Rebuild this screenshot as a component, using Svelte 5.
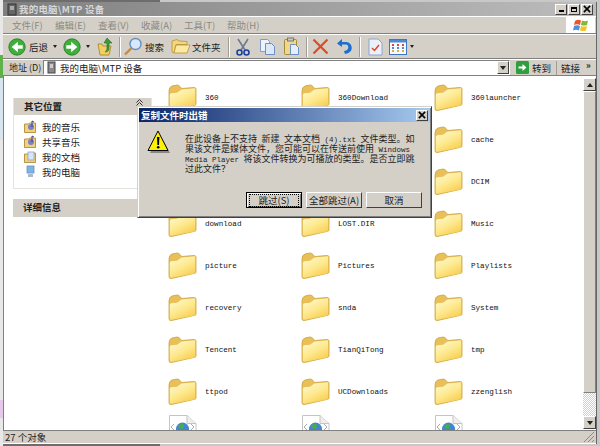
<script>
  const menus = ['文件(F)', '编辑(E)', '查看(V)', '收藏(A)', '工具(T)', '帮助(H)'];
  const places = [
    { label: '我的音乐', kind: 'music' },
    { label: '共享音乐', kind: 'music' },
    { label: '我的文档', kind: 'docs' },
    { label: '我的电脑', kind: 'pc' }
  ];
  const folders = [
    '360', '360Download', '360launcher',
    '', '', 'cache',
    '', '', 'DCIM',
    'download', 'LOST.DIR', 'Music',
    'picture', 'Pictures', 'Playlists',
    'recovery', 'snda', 'System',
    'Tencent', 'TianQiTong', 'tmp',
    'ttpod', 'UCDownloads', 'zzenglish'
  ];
</script>

<div class="screen">
  <div class="window">
    <div class="titlebar">
      <svg class="device" width="12" height="13" viewBox="0 0 12 13"><rect x="2" y="1" width="8" height="11" fill="#666" stroke="#333"/><rect x="4" y="3" width="4" height="4" fill="#aaa"/></svg>
      <span class="title">我的电脑\MTP 设备</span>
      <div class="caption">
        <button class="cap"><i class="min"></i></button>
        <button class="cap"><i class="max"></i></button>
        <button class="cap">
          <svg width="8" height="8" viewBox="0 0 9 9"><path d="M1 1l7 7M8 1L1 8" stroke="#000" stroke-width="1.800"/></svg>
        </button>
      </div>
    </div>

    <div class="menubar">
      <div class="menus">
        {#each menus as m}<span>{m}</span>{/each}
      </div>
      <div class="flag">
        <svg width="16" height="15" viewBox="0 0 16 15">
          <path d="M2 3q3-2 6-.5L7 7Q4 5.500 1 7z" fill="#e8552a"/>
          <path d="M9 2.500q3 1.500 6 0L14 7q-3 1-6 0z" fill="#7fb83a"/>
          <path d="M1 8q3-1.500 6 0l-1 4.500q-3-1.500-6 0z" fill="#4c8fe0"/>
          <path d="M8 8q3 1 6 0l-1 4.500q-3 1-6 0z" fill="#f4c32c"/>
        </svg>
      </div>
    </div>

    <div class="toolbar">
      <svg class="nav back" width="18" height="18" viewBox="0 0 22 22"><circle cx="11" cy="11" r="10" fill="#3fae3a" stroke="#1d7a22"/><path d="M18 9h-6V4.500L4.500 11l7.500 6.500V13h6z" fill="#fff"/></svg>
      <span class="tool-label">后退</span>
      <i class="caret first"></i>
      <svg class="nav" width="18" height="18" viewBox="0 0 22 22"><circle cx="11" cy="11" r="10" fill="#3fae3a" stroke="#1d7a22"/><path d="M4 9h6V4.500l7.500 6.500-7.500 6.500V13H4z" fill="#fff"/></svg>
      <i class="caret second"></i>
      <svg class="up" width="18" height="20" viewBox="0 0 18 20">
        <path d="M1 7h4l1 2h8l-2 9H3z" fill="#f2cf63" stroke="#a58122" stroke-width=".8"/>
        <path d="M10 1l5 5h-3v6c0 2-2 3-4 3 1-1 2-2 2-4V6H7z" fill="#3c9c3a" stroke="#25702a" stroke-width=".6"/>
      </svg>
      <i class="sep"></i>
      <svg class="search" width="20" height="20" viewBox="0 0 20 20">
        <circle cx="12.500" cy="7" r="5.500" fill="#d6e8fb" stroke="#6b8fbc" stroke-width="1.400"/>
        <path d="M8.500 11L2 17.500" stroke="#c98a3a" stroke-width="2.400"/>
      </svg>
      <span class="tool-label">搜索</span>
      <svg class="folders" width="20" height="18" viewBox="0 0 20 18">
        <path d="M1 3l5-1.500L8 3l8 .5v3H5L3 15 1 14z" fill="#f3d77a" stroke="#b99236" stroke-width=".8"/>
        <path d="M5 7h14l-3 8H3z" fill="#fbe9a4" stroke="#b99236" stroke-width=".8"/>
      </svg>
      <span class="tool-label folders-label">文件夹</span>
      <i class="sep"></i>
      <svg class="cut" width="14" height="18" viewBox="0 0 14 18">
        <path d="M2 1l7 11M12 1L5 12" stroke="#6a7a94" stroke-width="1.600"/>
        <circle cx="3.500" cy="14.500" r="2.500" fill="none" stroke="#1b3f9c" stroke-width="1.600"/>
        <circle cx="10.500" cy="14.500" r="2.500" fill="none" stroke="#1b3f9c" stroke-width="1.600"/>
      </svg>
      <svg class="copy" width="17" height="18" viewBox="0 0 17 18">
        <path d="M1.500 1.500h7l2 2v10h-9z" fill="#eef3fb" stroke="#7f9cc9"/>
        <path d="M6.500 5.500h6l3 3v8h-9z" fill="#dce8f8" stroke="#6d8fc6"/>
      </svg>
      <svg class="paste" width="17" height="19" viewBox="0 0 17 19">
        <rect x="1.500" y="2.500" width="12" height="15" rx="1" fill="#f0d88a" stroke="#a58a3a"/>
        <rect x="4.500" y="1" width="6" height="3" fill="#c9c9c0" stroke="#777"/>
        <path d="M7.500 7.500h5l3 3v7h-8z" fill="#e6eefa" stroke="#6d8fc6"/>
      </svg>
      <i class="sep"></i>
      <svg class="del" width="17" height="17" viewBox="0 0 17 17"><path d="M1.500 1.500l14 14M15.500 1.500l-14 14" stroke="#df4a22" stroke-width="2.200"/></svg>
      <svg class="undo" width="17" height="17" viewBox="0 0 17 17">
        <path d="M6 1L1 5.500 6 9V6.500h4c3 0 3 5 0 6l-2 .5 1 3c6-1 8-5 6-9-1-2-3-3-5-3H6z" fill="#1c6fd0"/>
      </svg>
      <i class="sep"></i>
      <svg class="props" width="15" height="18" viewBox="0 0 15 18">
        <path d="M1 1h9l4 4v12H1z" fill="#eaf1fb" stroke="#8aa6d2"/>
        <path d="M4 10l2.500 2.500L11 7" fill="none" stroke="#e0452a" stroke-width="1.500"/>
      </svg>
      <svg class="views" width="18" height="16" viewBox="0 0 18 16">
        <rect x=".5" y=".5" width="17" height="15" fill="#f7f9fd" stroke="#3f76c4"/>
        <rect x="1" y="1" width="16" height="2.500" fill="#4d8ad8"/>
        <path d="M3 5h2v2H3zM8 5h2v2H8zM13 5h2v2h-2z" fill="#d64a3a"/>
        <path d="M3 8h2v2H3zM8 8h2v2H8zM13 8h2v2h-2z" fill="#4d8ad8"/>
        <path d="M3 11h2v2H3zM8 11h2v2H8zM13 11h2v2h-2z" fill="#e0b030"/>
      </svg>
      <i class="caret last"></i>
    </div>

    <div class="addressbar">
      <span class="addr-label">地址 (D)</span>
      <div class="addr-field">
        <svg width="12" height="13" viewBox="0 0 12 13"><rect x="2" y="1" width="7" height="11" fill="#8a8a8a" stroke="#444"/><rect x="4" y="3" width="3" height="4" fill="#ccc"/></svg>
        <span class="addr-text">我的电脑\MTP 设备</span>
        <button class="combo"><i class="caret dark"></i></button>
      </div>
      <div class="goto">
        <svg width="13" height="13" viewBox="0 0 13 13"><rect width="13" height="13" rx="1.500" fill="#2f9e3c"/><path d="M2.500 5.500h4V3l4 3.500-4 3.500V7.500h-4z" fill="#fff"/></svg>
        <span>转到</span>
      </div>
      <div class="links"><span>链接</span><b>»</b></div>
    </div>

    <div class="content">
      <div class="sidebar">
        <div class="panel">
          <div class="panel-head">
            其它位置
            <svg class="chev" width="7" height="7" viewBox="0 0 7 7"><path d="M.5 3.500l3-3 3 3M.5 6.500l3-3 3 3" fill="none" stroke="#333"/></svg>
          </div>
          <ul class="panel-body">
            {#each places as p}
              <li>
                <svg width="13" height="13" viewBox="0 0 13 13">
                  {#if p.kind === 'pc'}
                    <rect x="3" y="1" width="7" height="7" fill="#7db4ea" stroke="#6f8fb5" stroke-width=".8"/>
                    <rect x="4" y="9" width="5" height="3" fill="#a9b9cc"/>
                  {:else}
                    <path d="M.500 4h4l1-1h6v9.500h-11z" fill="#f1d27a" stroke="#a8802a" stroke-width=".8"/>
                    {#if p.kind === 'music'}
                      <circle cx="7" cy="7" r="3" fill="#7a7fc9"/>
                      <path d="M8 7V1l2 1" stroke="#3c4390" fill="none"/>
                    {:else}
                      <rect x="4" y="2" width="6" height="8" fill="#d6e6f8" stroke="#7f9cc9" stroke-width=".7"/>
                    {/if}
                  {/if}
                </svg>
                {p.label}
              </li>
            {/each}
          </ul>
        </div>
        <div class="panel-head details">详细信息</div>
      </div>

      <div class="files">
        <div class="grid">
          {#each folders as name}
            <div class="item">
              <svg width="29" height="28" viewBox="0 0 29 28">
                <defs>
                  <linearGradient id="fold" x1="0" y1="0" x2=".6" y2="1">
                    <stop offset="0" stop-color="#fffcd8"/>
                    <stop offset=".6" stop-color="#fde88c"/>
                    <stop offset="1" stop-color="#f9cf55"/>
                  </linearGradient>
                </defs>
                <path d="M1 8q0-4 3-5l5-1q2 0 3.500 2l1 1.500L26 4.500q2 0 2 1.500v15q0 1-1 1.200L3.500 27.500q-2.500.5-2.500-2z" fill="#e9bf58" stroke="#c9a33e" stroke-width=".8"/>
                <path d="M1.800 12q0-1.500 1.500-1.700l5.700-.6 4.500-3.200 13.700-1.300v16.400q0 .8-.8 1L3.500 26.800q-1.700.3-1.700-1.300z" fill="url(#fold)"/>
              </svg>
              <span>{name}</span>
            </div>
          {/each}
          {#each [0, 1, 2] as i (i)}
            <div class="item page">
              <svg width="29" height="28" viewBox="0 0 29 28">
                <path d="M1.500 .500H19l9 8v19H1.500z" fill="#fff" stroke="#c4c4c4"/>
                <path d="M19 .500v8h9" fill="#eee" stroke="#c4c4c4"/>
                <path d="M6 9l-3 3 3 3M23 9l3 3-3 3" fill="none" stroke="#aaa"/>
                <circle cx="14.500" cy="14" r="6.500" fill="#3f86d6"/>
                <path d="M10.500 10q4-2 6 0l-2 4-4-1z" fill="#4cab46"/>
              </svg>
            </div>
          {/each}
        </div>
        <div class="scrollbar">
          <button class="arrow"><i class="caret up-caret"></i></button>
          <div class="thumb"></div>
          <div class="track"></div>
          <button class="arrow"><i class="caret dark"></i></button>
        </div>
      </div>
    </div>

    <div class="statusbar">
      <span>27 个对象</span>
      <svg width="12" height="12" viewBox="0 0 12 12"><path d="M11 1L1 11M11 5l-6 6M11 9l-2 2" stroke="#8d8a82"/></svg>
    </div>
  </div>

  <div class="dialog">
    <div class="dlg-title">
      <span>复制文件时出错</span>
      <button class="cap">
        <svg width="8" height="8" viewBox="0 0 9 9"><path d="M1 1l7 7M8 1L1 8" stroke="#000" stroke-width="1.800"/></svg>
      </button>
    </div>
    <div class="dlg-body">
      <svg class="warn" width="24" height="24" viewBox="0 0 24 24">
        <path d="M3 23h20L13 5z" fill="#8a8780"/>
        <path d="M11 1L1 20.500h20z" fill="#fff200" stroke="#000" stroke-width="1"/>
        <path d="M10 7h2.400l-.4 8h-1.600z" fill="#000"/>
        <circle cx="11.200" cy="17.300" r="1.300" fill="#000"/>
      </svg>
      <p>
        <span class="line">在此设备上不支持<i>&#160;</i>新建<i>&#160;</i>文本文档<i>&#160;(4).txt&#160;</i>文件类型。如</span>
        <span class="line">果该文件是媒体文件，您可能可以在传送前使用<i>&#160;Windows</i></span>
        <span class="line"><i>Media Player&#160;</i>将该文件转换为可播放的类型。是否立即跳</span>
        <span class="line">过此文件？</span>
      </p>
    </div>
    <div class="dlg-buttons">
      <button class="btn default"><span>跳过(S)</span></button>
      <button class="btn">全部跳过(A)</button>
      <button class="btn">取消</button>
    </div>
  </div>
</div>

<style>
  :global(body) {
    margin: 0;
    background: #d4d0c8;
  }

  .screen {
    position: relative;
    width: 600px;
    height: 446px;
    overflow: hidden;
    background:
      linear-gradient(180deg, #e8e8e8 0 55px, #5fb24a 55px 78px, #d8e4ee 78px 140px, #e8e8e8 140px 400px, #e6c8e8 400px 418px, #e8e8e8 418px) 0 0 / 3px 100% no-repeat,
      linear-gradient(90deg, #6d6d6d 0 160px, #c8c8c8 160px);
    font-family: "Noto Sans CJK SC", "Liberation Sans", sans-serif;
    font-size: 9px;
    color: #222;
  }

  .window {
    position: absolute;
    left: 3px;
    top: 2px;
    width: 594px;
    height: 442px;
    display: flex;
    flex-direction: column;
    background: #d4d0c8;
    border-right: 1px solid #666;
    box-sizing: border-box;
  }

  .titlebar {
    height: 14px;
    display: flex;
    align-items: center;
    gap: 1px;
    padding: 0 2px;
    background: linear-gradient(90deg, #7f7f7f, #bdbdbd);
    color: #d8d8d8;
    flex: none;
  }

  .device { margin-left: 1px; }

  .title { font-size: 9.500px; font-weight: 700; letter-spacing: .2px; }

  .caption {
    margin-left: auto;
    display: flex;
    gap: 1px;
    margin-right: 1px;
  }

  button { padding: 0; font: inherit; color: inherit; }

  .cap {
    width: 12px;
    height: 11px;
    display: flex;
    align-items: center;
    justify-content: center;
    background: #d4d0c8;
    border: 1px solid;
    border-color: #fff #404040 #404040 #fff;
    box-sizing: border-box;
  }

  .min { width: 5px; height: 2px; background: #000; margin-top: 4px; }
  .max { width: 6px; height: 5px; border: 1px solid #000; border-top-width: 2px; box-sizing: border-box; }

  .menubar {
    height: 18px;
    box-sizing: border-box;
    display: flex;
    border-top: 1px solid #fff;
    border-bottom: 1px solid #808080;
    flex: none;
  }

  .menus {
    flex: 1;
    display: flex;
    padding-left: 9px;
    align-items: center;
    color: #8a8a84;
    font-size: 9.500px;
  }

  .menus span { width: 43px; flex: none; }

  .flag {
    width: 29px;
    margin-right: 1px;
    background: #fff;
    display: flex;
    align-items: center;
    justify-content: center;
  }

  .toolbar {
    height: 25px;
    box-sizing: border-box;
    display: flex;
    align-items: center;
    padding-left: 5px;
    border-top: 1px solid #fff;
    border-bottom: 1px solid #808080;
    flex: none;
  }

  .tool-label { font-size: 9.500px; flex: none; }
  .folders-label { margin-right: 3px; }

  .nav { flex: none; }
  .back { margin-right: 3px; }

  .caret {
    width: 0;
    height: 0;
    border: 2.500px solid transparent;
    border-top: 3px solid #222;
    border-bottom: 0;
    flex: none;
  }

  .caret.first { margin: 0 6px 0 5px; }
  .caret.second { margin: 0 7px 0 5px; }
  .caret.last { margin-left: 3px; }
  .caret.dark,
  .up-caret { border-left-width: 3.500px; border-right-width: 3.500px; border-top-width: 4px; }
  .up-caret { transform: rotate(180deg); }

  .sep {
    width: 1px;
    height: 20px;
    background: #a09d95;
    box-shadow: 1px 0 #fff;
    margin: 0 4px;
    flex: none;
  }

  .toolbar svg { flex: none; }
  .search { margin: 0 2px 0 -1px; }
  .folders { margin: 0 1px 0 7px; }
  .cut { margin-left: 3.500px; }
  .copy { margin-left: 9px; }
  .paste { margin: 0 2px 0 7px; }
  .del { margin-left: 1px; }
  .undo { margin: 0 2px 0 7px; }
  .props { margin-left: 4px; }
  .views { margin-left: 6px; }

  .addressbar {
    height: 17px;
    box-sizing: border-box;
    display: flex;
    align-items: center;
    border-top: 1px solid #fff;
    border-bottom: 1px solid #808080;
    flex: none;
  }

  .addr-label { width: 40px; padding-left: 6px; box-sizing: border-box; font-size: 9px; flex: none; }

  .addr-field {
    width: 467px;
    height: 15px;
    display: flex;
    align-items: center;
    gap: 2px;
    box-sizing: border-box;
    background: #fff;
    border: 1px solid;
    border-color: #808080 #fff #fff #808080;
    padding-left: 2px;
    flex: none;
  }

  .addr-text { font-size: 9.500px; }

  .combo {
    margin-left: auto;
    width: 12px;
    height: 13px;
    display: flex;
    align-items: center;
    justify-content: center;
    background: #d4d0c8;
    border: 1px solid;
    border-color: #fff #404040 #404040 #fff;
    box-sizing: border-box;
  }

  .goto {
    display: flex;
    align-items: center;
    gap: 3px;
    padding-left: 6px;
    width: 47px;
    box-sizing: border-box;
    font-size: 9.500px;
    border-right: 1px solid #a09d95;
    flex: none;
  }

  .links { display: flex; gap: 6px; padding-left: 4px; font-size: 9.500px; }
  .links b { font-size: 9px; line-height: 10px; }

  .content {
    flex: 1;
    min-height: 0;
    display: flex;
    background: #fff;
    border-left: 1px solid #808080;
    overflow: hidden;
  }

  .sidebar {
    width: 156px;
    padding: 22px 0 0 9px;
    box-sizing: border-box;
    flex: none;
  }

  .panel { width: 139px; border: 1px solid #e5e3de; border-top: 0; box-sizing: border-box; margin-bottom: 10px; }

  .panel-head {
    height: 17px;
    display: flex;
    align-items: center;
    justify-content: space-between;
    padding: 0 8px 2px 10px;
    box-sizing: border-box;
    background: #d4d0c8;
    font-weight: 700;
    font-size: 9.500px;
  }

  .details { width: 139px; height: 18px; }

  .chev { margin-top: -6px; }

  .panel-body {
    list-style: none;
    margin: 0;
    padding: 4px 0 9px 10px;
  }

  .panel-body li {
    height: 15px;
    display: flex;
    align-items: center;
    gap: 5px;
    font-size: 9.500px;
  }

  .files {
    flex: 1;
    min-width: 0;
    display: flex;
    overflow: hidden;
  }

  .grid {
    flex: 1;
    display: grid;
    grid-template-columns: repeat(3, 133px);
    grid-auto-rows: 42px;
    padding-left: 8px;
    align-content: start;
  }

  .item {
    display: flex;
    align-items: center;
    gap: 8px;
    height: 42px;
    font-family: "Liberation Mono", monospace;
    font-size: 7.600px;
    color: #111;
  }

  .item svg { flex: none; }
  .item span { margin-top: 2px; }
  .page { align-items: flex-start; padding-top: 3px; box-sizing: border-box; }

  .scrollbar {
    width: 13px;
    display: flex;
    flex-direction: column;
    flex: none;
    padding: 2px 0 1px;
    box-sizing: border-box;
  }

  .arrow {
    height: 13px;
    display: flex;
    align-items: center;
    justify-content: center;
    background: #d4d0c8;
    border: 1px solid;
    border-color: #fff #404040 #404040 #fff;
    box-sizing: border-box;
    flex: none;
  }

  .thumb {
    height: 302px;
    background: #d4d0c8;
    border: 1px solid;
    border-color: #fff #808080 #808080 #fff;
    box-sizing: border-box;
    flex: none;
  }

  .track {
    flex: 1;
    background: repeating-conic-gradient(#d4d0c8 0 25%, #fff 0 50%) 0 0 / 2px 2px;
  }

  .statusbar {
    height: 14px;
    box-sizing: border-box;
    display: flex;
    align-items: center;
    justify-content: space-between;
    padding: 0 1px 0 2px;
    border-top: 1px solid #808080;
    border-bottom: 1px solid #fff;
    font-size: 9.500px;
    flex: none;
  }

  .dialog {
    position: absolute;
    left: 137px;
    top: 106px;
    width: 295px;
    height: 112px;
    box-sizing: border-box;
    background: #d4d0c8;
    border: 1px solid;
    border-color: #d4d0c8 #404040 #404040 #d4d0c8;
    box-shadow: inset 1px 1px #fff, inset -1px -1px #808080;
    padding: 1px;
    display: flex;
    flex-direction: column;
  }

  .dlg-title {
    height: 14px;
    display: flex;
    align-items: center;
    justify-content: space-between;
    padding: 0 2px;
    background: linear-gradient(90deg, #0a246a, #a6caf0);
    color: #fff;
    font-weight: 700;
    font-size: 9.500px;
    flex: none;
  }

  .dlg-body {
    display: flex;
    gap: 14px;
    padding: 12px 8px 0 8px;
    flex: none;
  }

  .warn { flex: none; margin-top: -4px; }

  .dlg-body p {
    margin: 0;
    font-size: 9px;
    line-height: 10px;
  }

  .line { display: block; height: 10px; white-space: pre; }

  .line i {
    font-family: "Liberation Mono", monospace;
    font-style: normal;
    font-size: 7.500px;
  }

  .dlg-buttons {
    margin-top: auto;
    margin-bottom: 8px;
    display: flex;
    justify-content: flex-end;
    gap: 4px;
    padding-right: 8px;
  }

  .btn {
    width: 56px;
    height: 16px;
    box-sizing: border-box;
    background: #d4d0c8;
    border: 1px solid;
    border-color: #fff #404040 #404040 #fff;
    font-size: 9.500px;
    display: flex;
    align-items: center;
    justify-content: center;
  }

  .btn.default {
    border-color: #000;
    box-shadow: inset 1px 1px #fff, inset -1px -1px #808080;
  }

  .btn.default span {
    outline: 1px dotted #000;
    width: 48px;
    height: 11px;
    line-height: 11px;
    text-align: center;
  }
</style>
